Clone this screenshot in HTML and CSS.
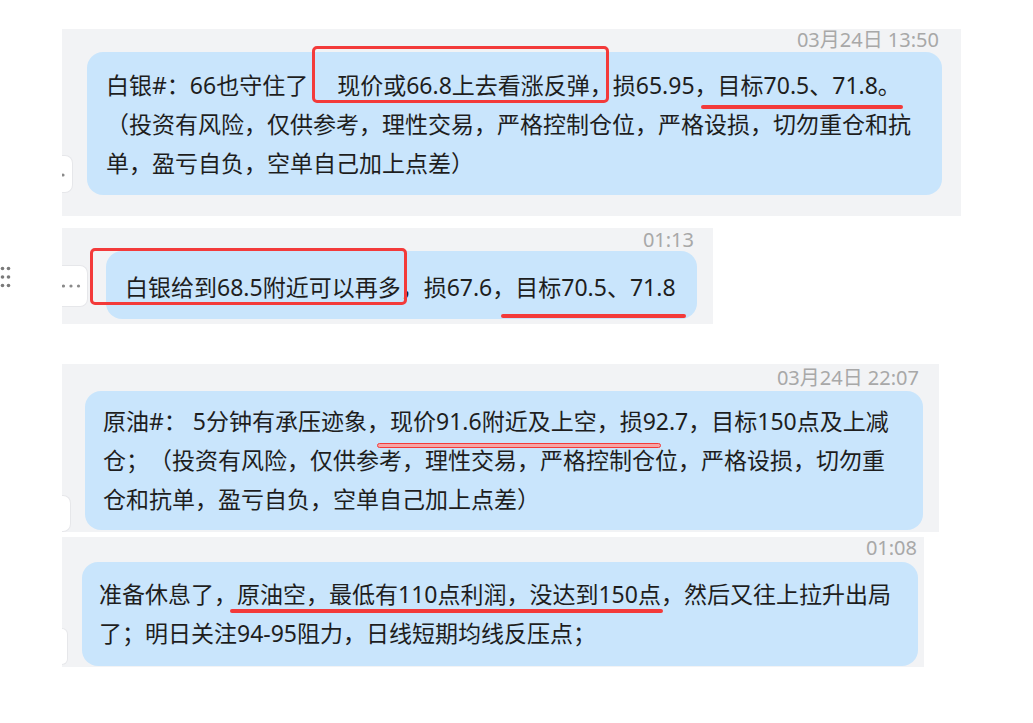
FILE: index.html
```html
<!DOCTYPE html>
<html lang="zh-CN">
	<head>
		<meta charset="utf-8" />
		<title>消息记录</title>
		<meta name="viewport" content="width=device-width, initial-scale=1.0" />
		<link rel="stylesheet" href="styles.css">
	</head>

	<body>
		<div class="chat">

			<div class="msg msg-1">
				<div class="tab tab-1">
					<svg width="10" height="36" viewBox="0 0 10 36"><circle cx="1" cy="19" r="1.6" fill="#8a8a8a"/></svg>
				</div>
				<div class="body">
					<div class="time">03月24日 13:50</div>
					<div class="bubble bubble-1">白银#：66也守住了<span class="box box-1">　 现价或66.8上去看涨反弹，</span>损65.95，<span class="line line-1">目标70.5、71.8。</span><br>
（投资有风险，仅供参考，理性交易，严格控制仓位，严格设损，切勿重仓和抗<br>
单，盈亏自负，空单自己加上点差）</div>
				</div>
			</div>

			<div class="msg msg-2">
				<!-- drag handle at the window edge -->
				<svg class="handle" width="12" height="24" viewBox="0 0 12 24">
					<circle cx="2.5" cy="2.5" r="1.8" fill="#7a7a7a"/>
					<circle cx="8.5" cy="2.5" r="1.8" fill="#7a7a7a"/>
					<circle cx="2.5" cy="11" r="1.8" fill="#7a7a7a"/>
					<circle cx="8.5" cy="11" r="1.8" fill="#7a7a7a"/>
					<circle cx="2.5" cy="19.5" r="1.8" fill="#7a7a7a"/>
					<circle cx="8.5" cy="19.5" r="1.8" fill="#7a7a7a"/>
				</svg>
				<div class="tab tab-2">
					<svg width="24" height="40" viewBox="0 0 24 40">
						<circle cx="1.5" cy="20" r="1.6" fill="#8a8a8a"/>
						<circle cx="9" cy="20" r="1.6" fill="#8a8a8a"/>
						<circle cx="16.5" cy="20" r="1.6" fill="#8a8a8a"/>
					</svg>
				</div>
				<div class="body">
					<div class="time">01:13</div>
					<div class="bubble bubble-2"><span class="box box-2">白银给到68.5附近可以再多</span>，损67.6，<span class="line line-2">目标70.5、71.8</span></div>
				</div>
			</div>

			<div class="msg msg-3">
				<div class="tab tab-3"></div>
				<div class="body">
					<div class="time">03月24日 22:07</div>
					<div class="bubble bubble-3">原油#： 5分钟有承压迹象，<span class="line line-3">现价91.6附近及上空，</span>损92.7，目标150点及上减<br>
仓；（投资有风险，仅供参考，理性交易，严格控制仓位，严格设损，切勿重<br>
仓和抗单，盈亏自负，空单自己加上点差）</div>
				</div>
			</div>

			<div class="msg msg-4">
				<div class="tab tab-4"></div>
				<div class="body">
					<div class="time">01:08</div>
					<div class="bubble bubble-4">准备休息了，<span class="line line-4">原油空，最低有110点利润，没达到150点</span>，然后又往上拉升出局<br>
了；明日关注94-95阻力，日线短期均线反压点；</div>
				</div>
			</div>

		</div>
	</body>
</html>
```

FILE: styles.css
```css
body { margin: 0; background: #fff; color: #1e1e1e; font-family: "Noto Sans", "Noto Sans CJK SC", sans-serif; }

.chat { display: flex; flex-direction: column; align-items: flex-start; padding: 29px 0 0 62px; }

.msg { position: relative; display: flex; align-items: flex-end; background: #f2f3f5; }
.body { display: flex; flex-direction: column; }
.time { font-size: 20px; line-height: 22px; color: #a8a8a8; text-align: right; padding-right: 3px; }
.bubble { box-sizing: border-box; background: #c9e5fc; border-radius: 16px; font-size: 23px; line-height: 39px; white-space: nowrap; text-spacing-trim: space-all; }

.tab { box-sizing: border-box; overflow: hidden; background: #fff; border: 1px solid #e6e7ea; border-left: none; border-radius: 0 8px 8px 0; }
.tab svg { display: block; }
.handle { position: absolute; left: -62px; top: 38px; }

/* one block per screenshot strip */
.msg-1 { padding: 0 19px 21px 0; }
.msg-1 .bubble { width: 855px; margin-top: 1px; padding: 14px 19px 12px; }
.tab-1 { width: 11px; height: 38px; margin: 0 14px 2px 0; }

.msg-2 { margin-top: 12px; padding: 1px 16px 5px 0; }
.msg-2 .bubble { width: 591px; padding: 17px 19px 12px; }
.tab-2 { width: 26px; height: 42px; margin: 0 18px 12px 0; }

.msg-3 { margin-top: 40px; padding: 3px 16px 2px 0; }
.msg-3 .time { padding-right: 4px; }
.msg-3 .bubble { width: 838px; margin-top: 2px; padding: 11px 18px 11px; }
.tab-3 { width: 9px; height: 37px; margin: 0 14px -2px 0; }

.msg-4 { margin-top: 5px; padding: 0 6px 1px 0; }
.msg-4 .time { padding-right: 1px; }
.msg-4 .bubble { width: 836px; margin-top: 3px; padding: 13px 17px 13px; }
.tab-4 { width: 6px; height: 37px; margin: 0 14px 1px 0; }

/* red marks drawn over the text */
.box, .line { position: relative; }
.box::after { content: ""; position: absolute; top: -23px; bottom: -2px; border: 3px solid #f33a3a; border-radius: 5px; }
.box-1::after { left: 4px; right: 4px; }
.box-2::after { left: -35px; right: -6px; }

.line::after { content: ""; position: absolute; height: 4px; border-radius: 2px; background: #f33a3a; }
.line-1::after { left: -17px; right: -2px; bottom: -8px; }
.line-2::after { left: -14px; right: -10px; bottom: -15px; }
.line-3::after { box-sizing: border-box; left: -13px; right: -41px; bottom: -11px; height: 5px; background: #f6a5a5; border: 1.5px solid #f33a3a; border-radius: 3px; }
.line-4::after { left: -7px; right: -2px; bottom: -3px; }
```
